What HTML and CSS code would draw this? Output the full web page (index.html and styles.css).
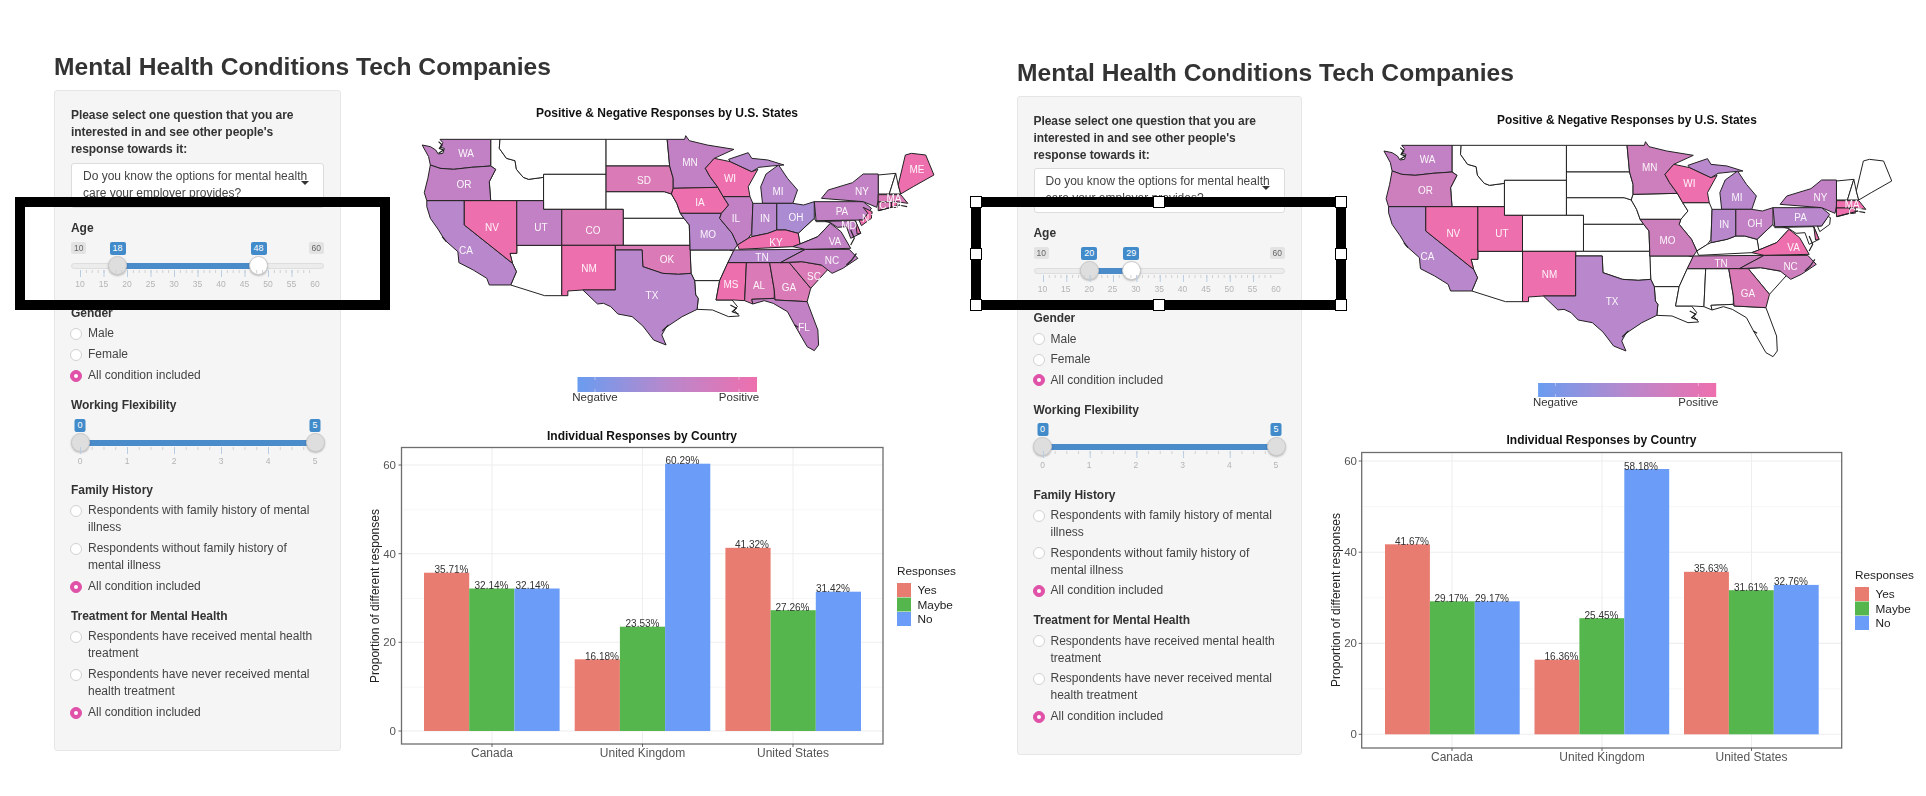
FILE: index.html
```html
<!DOCTYPE html>
<html lang="en">
<head>
<meta charset="utf-8">
<title>Mental Health Conditions Tech Companies</title>
<link rel="stylesheet" href="styles.css">
</head>
<body>
<main class="page">
  <section class="shot shot-a">
    <h2 class="title">Mental Health Conditions Tech Companies</h2>
    <div class="shot-body">
      <aside class="sidebar">
        <label class="label">Please select one question that you are<br>interested in and see other people's<br>response towards it:</label>
        <div class="select">Do you know the options for mental health<br>care your employer provides?<i class="caret"></i></div>
        <h4 class="label age-label">Age</h4>
        <div class="slider">
          <div class="values"><span class="edge">10</span><span class="edge">60</span>
            <div class="rail"><b class="badge" style="left:16%">18</b><b class="badge" style="left:76%">48</b></div></div>
          <div class="track"><div class="rail"><i class="fill" style="left:16%;width:60%"></i><i class="thumb" style="left:16%"></i><i class="thumb thumb-on" style="left:76%"></i></div></div>
          <div class="rail grid grid-age"></div>
          <div class="rail ticks"><span>10</span><span>15</span><span>20</span><span>25</span><span>30</span><span>35</span><span>40</span><span>45</span><span>50</span><span>55</span><span>60</span></div>
        </div>
        <h4 class="label">Gender</h4>
        <div class="radios">
          <div class="radio"><i class="dot"></i><span>Male</span></div>
          <div class="radio"><i class="dot"></i><span>Female</span></div>
          <div class="radio"><i class="dot dot-on"></i><span>All condition included</span></div>
        </div>
        <h4 class="label group">Working Flexibility</h4>
        <div class="slider">
          <div class="values"><div class="rail"><b class="badge" style="left:0%">0</b><b class="badge" style="left:100%">5</b></div></div>
          <div class="track"><div class="rail"><i class="fill" style="left:0%;width:100%"></i><i class="thumb" style="left:0%"></i><i class="thumb" style="left:100%"></i></div></div>
          <div class="rail grid grid-flex"></div>
          <div class="rail ticks"><span>0</span><span>1</span><span>2</span><span>3</span><span>4</span><span>5</span></div>
        </div>
        <h4 class="label">Family History</h4>
        <div class="radios">
          <div class="radio"><i class="dot"></i><span>Respondents with family history of mental<br>illness</span></div>
          <div class="radio"><i class="dot"></i><span>Respondents without family history of<br>mental illness</span></div>
          <div class="radio"><i class="dot dot-on"></i><span>All condition included</span></div>
        </div>
        <h4 class="label group">Treatment for Mental Health</h4>
        <div class="radios">
          <div class="radio"><i class="dot"></i><span>Respondents have received mental health<br>treatment</span></div>
          <div class="radio"><i class="dot"></i><span>Respondents have never received mental<br>health treatment</span></div>
          <div class="radio"><i class="dot dot-on"></i><span>All condition included</span></div>
        </div>
      </aside>
      <div class="plots">
        <svg class="map" viewBox="0 0 560 330" preserveAspectRatio="none" role="img" aria-label="Map of responses by U.S. state">
          <defs>
            <linearGradient id="scale"><stop offset="0" stop-color="#6a9cf0"/><stop offset=".5" stop-color="#b888cc"/><stop offset="1" stop-color="#ee6fae"/></linearGradient>
            <path id="wa" class="st" d="M112,148 L254,148 L254,228 L200,232 L150,238 L112,235 L85,225 L80,200 L62,165 L85,170 L100,180 L107,192 L120,190 L124,175 L112,172 L120,158 Z"/>
            <path id="or" class="st" d="M85,225 L112,235 L150,238 L200,232 L254,228 L268,238 L250,275 L254,332 L75,332 L68,308 L78,265 Z"/>
            <path id="ca" class="st" d="M75,332 L180,332 L180,405 L315,520 L326,545 L310,585 L250,585 L243,565 L205,540 L165,518 L162,485 L125,450 L108,420 L85,385 L75,350 Z"/>
            <path id="nv" class="st" d="M180,332 L327,332 L327,490 L308,490 L315,520 L180,405 Z"/>
            <path id="id" class="st" d="M254,148 L280,148 L278,175 L298,205 L322,212 L326,238 L345,262 L360,268 L402,262 L402,332 L254,332 L250,275 L268,238 L254,228 Z"/>
            <path id="mt" class="st" d="M280,148 L577,148 L577,253 L402,253 L402,262 L360,268 L345,262 L326,238 L322,212 L298,205 L278,175 Z"/>
            <path id="wy" class="st" d="M402,253 L577,253 L577,358 L402,358 Z"/>
            <path id="ut" class="st" d="M327,332 L402,332 L402,358 L453,358 L453,466 L327,466 Z"/>
            <path id="co" class="st" d="M453,358 L625,358 L625,466 L453,466 Z"/>
            <path id="az" class="st" d="M327,466 L453,466 L453,617 L405,617 L310,585 L326,545 L315,520 L308,490 L327,490 Z"/>
            <path id="nm" class="st" d="M453,466 L603,466 L603,600 L512,600 L470,603 L470,617 L453,617 Z"/>
            <path id="nd" class="st" d="M577,148 L748,148 L755,228 L577,228 Z"/>
            <path id="sd" class="st" d="M577,228 L755,228 L765,265 L765,295 L760,312 L740,305 L577,305 Z"/>
            <path id="ne" class="st" d="M577,305 L740,305 L760,312 L775,340 L785,370 L795,385 L625,385 L625,358 L577,358 Z"/>
            <path id="ks" class="st" d="M625,385 L795,385 L810,405 L812,466 L625,466 Z"/>
            <path id="ok" class="st" d="M603,466 L812,466 L815,550 L780,553 L735,550 L680,530 L678,480 L603,480 Z"/>
            <path id="tx" class="st" d="M603,480 L678,480 L680,530 L735,550 L780,553 L815,550 L825,572 L828,615 L835,625 L832,658 L790,680 L745,712 L733,735 L745,765 L710,750 L680,708 L650,680 L610,672 L590,650 L570,640 L553,642 L512,600 L603,600 Z"/>
            <path id="mn" class="st" d="M748,148 L797,148 L800,137 L810,152 L860,165 L935,178 L880,205 L855,235 L868,260 L890,292 L765,295 L765,265 L755,228 Z"/>
            <path id="ia" class="st" d="M765,295 L890,292 L905,320 L920,345 L900,370 L785,370 L775,340 L760,312 Z"/>
            <path id="mo" class="st" d="M785,370 L900,370 L895,385 L930,430 L945,465 L935,480 L920,480 L812,480 L812,466 L810,405 L795,385 Z"/>
            <path id="ar" class="st" d="M812,480 L920,480 L935,483 L918,518 L895,572 L825,572 L815,550 Z"/>
            <path id="la" class="st" d="M825,572 L895,572 L885,630 L930,630 L945,650 L935,660 L950,678 L920,680 L875,660 L832,658 L835,625 L828,615 Z"/>
            <path id="wi" class="st" d="M855,235 L880,205 L925,215 L985,245 L1002,238 L975,290 L980,320 L905,320 L890,292 L868,260 Z"/>
            <path id="il" class="st" d="M905,320 L980,320 L988,340 L985,430 L975,445 L945,465 L930,430 L895,385 L900,370 L920,345 Z"/>
            <path id="mu" class="st" d="M920,208 L975,188 L985,205 L1030,210 L1075,225 L1040,228 L1005,232 L985,245 L925,215 Z"/>
            <path id="ml" class="st" d="M1015,340 L1010,290 L1025,252 L1060,225 L1085,265 L1113,300 L1100,340 Z"/>
            <path id="in" class="st" d="M988,340 L1055,340 L1055,420 L1030,430 L985,440 L985,430 Z"/>
            <path id="oh" class="st" d="M1055,340 L1100,340 L1130,345 L1160,335 L1160,385 L1115,430 L1080,420 L1055,420 Z"/>
            <path id="ky" class="st" d="M945,465 L975,445 L985,440 L1030,430 L1055,420 L1080,420 L1115,430 L1120,462 L1100,470 L950,478 Z"/>
            <path id="tn" class="st" d="M935,480 L1135,478 L1065,518 L918,518 Z"/>
            <path id="ms" class="st" d="M918,518 L970,518 L965,632 L935,630 L885,630 L895,572 Z"/>
            <path id="al" class="st" d="M970,518 L1035,518 L1048,600 L1048,625 L985,628 L988,642 L965,632 Z"/>
            <path id="ga" class="st" d="M1035,518 L1090,518 L1150,595 L1140,635 L1050,630 L1048,600 Z"/>
            <path id="sc" class="st" d="M1090,518 L1125,515 L1205,530 L1150,595 Z"/>
            <path id="nc" class="st" d="M1065,518 L1135,478 L1258,478 L1282,505 L1240,535 L1210,550 L1180,525 L1125,515 Z"/>
            <path id="va" class="st" d="M1100,470 L1120,462 L1170,440 L1205,400 L1235,425 L1262,475 L1135,478 Z"/>
            <path id="wv" class="st" d="M1115,430 L1160,385 L1165,395 L1205,395 L1205,400 L1170,440 L1120,462 Z"/>
            <path id="pa" class="st" d="M1160,335 L1297,335 L1320,355 L1297,390 L1165,392 Z"/>
            <path id="ny" class="st" d="M1180,325 L1199,300 L1267,278 L1297,252 L1339,252 L1339,330 L1335,352 L1297,335 Z"/>
            <path id="nj" class="st" d="M1297,352 L1322,365 L1320,385 L1292,407 L1285,390 L1297,390 L1310,370 Z"/>
            <path id="me" class="st" d="M1395,285 L1405,240 L1415,195 L1432,190 L1472,195 L1495,255 L1437,290 L1402,312 Z"/>
            <path id="vt" class="st" d="M1339,255 L1388,250 L1370,312 L1339,312 Z"/>
            <path id="nh" class="st" d="M1388,250 L1395,285 L1402,312 L1370,312 Z"/>
            <path id="ma" class="st" d="M1339,314 L1402,314 L1422,340 L1395,336 L1339,336 Z"/>
            <path id="ct" class="st" d="M1339,336 L1376,336 L1376,352 L1339,362 Z"/>
            <path id="ri" class="st" d="M1376,336 L1392,336 L1392,352 L1376,352 Z"/>
            <path id="md" class="st" d="M1190,394 L1275,392 L1290,430 L1262,445 L1250,410 L1225,412 L1205,398 Z"/>
            <path id="de" class="st" d="M1275,392 L1290,430 L1280,432 Z"/>
            <path id="fl" class="st" d="M988,642 L985,628 L1048,625 L1050,630 L1140,635 L1170,720 L1172,765 L1160,782 L1140,770 L1105,705 L1085,665 L1045,640 L1020,632 Z"/>
            <path id="coast" class="st" d="M108,155 L118,165 L110,175 L122,180 L108,190 M1262,420 L1272,445 L1262,465 M1278,490 L1265,510 L1250,525 M925,645 L942,655 L930,665 L948,672 M745,712 L735,722 L752,705 M118,440 L130,455 M1105,705 L1115,712 M1340,362 L1400,345 M1395,345 L1420,350"/>
          </defs>
          <text class="chart-title" x="267" y="27" text-anchor="middle">Positive &amp; Negative Responses by U.S. States</text>
          <g class="states" transform="scale(.35714 .33333)">
            <use href="#id"/><use href="#mt"/><use href="#wy"/><use href="#az"/><use href="#nd"/><use href="#ne"/><use href="#ks"/><use href="#ar"/><use href="#la"/><use href="#wv"/><use href="#vt"/><use href="#nh"/>
            <use href="#wa" class="c3"/><use href="#or" class="c3"/><use href="#ca" class="c4"/><use href="#nv" class="c1"/><use href="#ut" class="c3"/><use href="#co" class="c2"/><use href="#nm" class="c1"/><use href="#ok" class="c2"/><use href="#tx" class="c4"/><use href="#sd" class="c2"/><use href="#mn" class="c3"/><use href="#ia" class="c1"/><use href="#mo" class="c4"/><use href="#wi" class="c1"/><use href="#il" class="c3"/><use href="#mu" class="c4"/><use href="#ml" class="c4"/><use href="#in" class="c4"/><use href="#oh" class="c5"/><use href="#ky" class="c1"/><use href="#tn" class="c4"/><use href="#ms" class="c1"/><use href="#al" class="c2"/><use href="#ga" class="c2"/><use href="#sc" class="c2"/><use href="#nc" class="c3"/><use href="#va" class="c3"/><use href="#pa" class="c3"/><use href="#ny" class="c3"/><use href="#nj" class="c1"/><use href="#me" class="c1"/><use href="#ma" class="c2"/><use href="#ct" class="c2"/><use href="#ri" class="c1"/><use href="#md" class="c3"/><use href="#de" class="c1"/><use href="#fl" class="c3"/><use href="#coast" class="bare"/>
          </g>
          <g class="st-names">
            <text x="66" y="63">WA</text><text x="64" y="94">OR</text><text x="66" y="160">CA</text><text x="92" y="137">NV</text><text x="141" y="137">UT</text><text x="193" y="140">CO</text><text x="189" y="178">NM</text><text x="252" y="205">TX</text><text x="267" y="169">OK</text><text x="244" y="90">SD</text><text x="290" y="72">MN</text><text x="300" y="112">IA</text><text x="308" y="144">MO</text><text x="330" y="88">WI</text><text x="336" y="128">IL</text><text x="378" y="101">MI</text><text x="365" y="128">IN</text><text x="396" y="127">OH</text><text x="376" y="152">KY</text><text x="362" y="167">TN</text><text x="331" y="194">MS</text><text x="359" y="195">AL</text><text x="389" y="197">GA</text><text x="414" y="186">SC</text><text x="432" y="170">NC</text><text x="435" y="151">VA</text><text x="442" y="121">PA</text><text x="462" y="101">NY</text><text x="517" y="79">ME</text><text x="494" y="108">MA</text><text x="486" y="115">CT</text><text x="497" y="116">RI</text><text x="468" y="128">NJ</text><text x="449" y="135">MD</text><text x="404" y="237">FL</text>
          </g>
          <rect x="177.5" y="287" width="179.5" height="15" fill="url(#scale)"/>
          <path class="bar-tick" d="M195,287v3M195,299v3M339,287v3M339,299v3"/>
          <text class="scale-text" x="195" y="311" text-anchor="middle">Negative</text>
          <text class="scale-text" x="339" y="311" text-anchor="middle">Positive</text>
        </svg>
        <svg class="bars" viewBox="360 420 620 350" role="img" aria-label="Individual responses by country">
          <text class="chart-title" x="642" y="440" text-anchor="middle">Individual Responses by Country</text>
          <path class="minor" d="M402,509.8H883M402,598.5H883M402,687.2H883"/>
          <path class="major" d="M402,465H883M402,553.7H883M402,642.3H883M402,731H883M492,448V744M642.5,448V744M793,448V744"/>
          <rect class="yes" x="424" y="572.7" width="45.2" height="158.3"/><rect class="maybe" x="469.2" y="588.5" width="45.2" height="142.5"/><rect class="no" x="514.4" y="588.5" width="45.2" height="142.5"/>
          <rect class="yes" x="574.7" y="659.3" width="45.2" height="71.7"/><rect class="maybe" x="619.9" y="626.7" width="45.2" height="104.3"/><rect class="no" x="665.1" y="463.7" width="45.2" height="267.3"/>
          <rect class="yes" x="725.4" y="547.8" width="45.2" height="183.2"/><rect class="maybe" x="770.6" y="610.2" width="45.2" height="120.8"/><rect class="no" x="815.8" y="591.7" width="45.2" height="139.3"/>
          <rect class="frame" x="401.5" y="447.5" width="481.5" height="296.5"/>
          <path class="axis-tick" d="M398.5,465h3M398.5,553.7h3M398.5,642.3h3M398.5,731h3M492,744v3M642.5,744v3M793,744v3"/>
          <g class="val">
            <text x="451.5" y="573">35.71%</text><text x="491.5" y="589">32.14%</text><text x="532.5" y="589">32.14%</text>
            <text x="602" y="659.5">16.18%</text><text x="642.5" y="627">23.53%</text><text x="682.5" y="464">60.29%</text>
            <text x="752" y="548">41.32%</text><text x="792.5" y="610.5">27.26%</text><text x="833" y="592">31.42%</text>
          </g>
          <g class="tick-y"><text x="396" y="469">60</text><text x="396" y="557.7">40</text><text x="396" y="646.3">20</text><text x="396" y="735">0</text></g>
          <g class="tick-x"><text x="492" y="757">Canada</text><text x="642.5" y="757">United Kingdom</text><text x="793" y="757">United States</text></g>
          <text class="axis-title" transform="translate(379 596) rotate(-90)" text-anchor="middle">Proportion of different responses</text>
          <text class="legend-title" x="897" y="575">Responses</text>
          <rect class="yes" x="897" y="583" width="14" height="14"/><rect class="maybe" x="897" y="597.5" width="14" height="14"/><rect class="no" x="897" y="612" width="14" height="14"/>
          <g class="legend-text"><text x="917.5" y="594">Yes</text><text x="917.5" y="608.5">Maybe</text><text x="917.5" y="623">No</text></g>
        </svg>
      </div>
    </div>
  </section>

  <section class="shot shot-b">
    <h2 class="title">Mental Health Conditions Tech Companies</h2>
    <div class="shot-body">
      <aside class="sidebar">
        <label class="label">Please select one question that you are<br>interested in and see other people's<br>response towards it:</label>
        <div class="select">Do you know the options for mental health<br>care your employer provides?<i class="caret"></i></div>
        <h4 class="label age-label">Age</h4>
        <div class="slider">
          <div class="values"><span class="edge">10</span><span class="edge">60</span>
            <div class="rail"><b class="badge" style="left:20%">20</b><b class="badge" style="left:38%">29</b></div></div>
          <div class="track"><div class="rail"><i class="fill" style="left:20%;width:18%"></i><i class="thumb" style="left:20%"></i><i class="thumb thumb-on" style="left:38%"></i></div></div>
          <div class="rail grid grid-age"></div>
          <div class="rail ticks"><span>10</span><span>15</span><span>20</span><span>25</span><span>30</span><span>35</span><span>40</span><span>45</span><span>50</span><span>55</span><span>60</span></div>
        </div>
        <h4 class="label">Gender</h4>
        <div class="radios">
          <div class="radio"><i class="dot"></i><span>Male</span></div>
          <div class="radio"><i class="dot"></i><span>Female</span></div>
          <div class="radio"><i class="dot dot-on"></i><span>All condition included</span></div>
        </div>
        <h4 class="label group">Working Flexibility</h4>
        <div class="slider">
          <div class="values"><div class="rail"><b class="badge" style="left:0%">0</b><b class="badge" style="left:100%">5</b></div></div>
          <div class="track"><div class="rail"><i class="fill" style="left:0%;width:100%"></i><i class="thumb" style="left:0%"></i><i class="thumb" style="left:100%"></i></div></div>
          <div class="rail grid grid-flex"></div>
          <div class="rail ticks"><span>0</span><span>1</span><span>2</span><span>3</span><span>4</span><span>5</span></div>
        </div>
        <h4 class="label">Family History</h4>
        <div class="radios">
          <div class="radio"><i class="dot"></i><span>Respondents with family history of mental<br>illness</span></div>
          <div class="radio"><i class="dot"></i><span>Respondents without family history of<br>mental illness</span></div>
          <div class="radio"><i class="dot dot-on"></i><span>All condition included</span></div>
        </div>
        <h4 class="label group">Treatment for Mental Health</h4>
        <div class="radios">
          <div class="radio"><i class="dot"></i><span>Respondents have received mental health<br>treatment</span></div>
          <div class="radio"><i class="dot"></i><span>Respondents have never received mental<br>health treatment</span></div>
          <div class="radio"><i class="dot dot-on"></i><span>All condition included</span></div>
        </div>
      </aside>
      <div class="plots">
        <svg class="map" viewBox="0 0 560 330" preserveAspectRatio="none" role="img" aria-label="Map of responses by U.S. state">
          <text class="chart-title" x="267" y="28" text-anchor="middle">Positive &amp; Negative Responses by U.S. States</text>
          <g class="states" transform="scale(.35714 .33333)">
            <use href="#id"/><use href="#mt"/><use href="#wy"/><use href="#az"/><use href="#nd"/><use href="#ne"/><use href="#ks"/><use href="#ar"/><use href="#la"/><use href="#wv"/><use href="#vt"/><use href="#nh"/><use href="#sd"/><use href="#ia"/><use href="#il"/><use href="#co"/><use href="#ok"/><use href="#ky"/><use href="#ms"/><use href="#al"/><use href="#sc"/><use href="#fl"/><use href="#me"/><use href="#nj"/><use href="#md"/>
            <use href="#wa" class="c3"/><use href="#or" class="c6"/><use href="#ca" class="c4"/><use href="#nv" class="c1"/><use href="#ut" class="c1"/><use href="#nm" class="c1"/><use href="#tx" class="c4"/><use href="#mn" class="c6"/><use href="#mo" class="c6"/><use href="#wi" class="c1"/><use href="#mu" class="c4"/><use href="#ml" class="c4"/><use href="#in" class="c4"/><use href="#oh" class="c3"/><use href="#tn" class="c6"/><use href="#ga" class="c2"/><use href="#nc" class="c6"/><use href="#va" class="c1"/><use href="#pa" class="c4"/><use href="#ny" class="c3"/><use href="#ma" class="c1"/><use href="#ct" class="c1"/><use href="#ri" class="c1"/><use href="#de" class="c1"/><use href="#coast" class="bare"/>
          </g>
          <g class="st-names">
            <text x="66" y="63">WA</text><text x="64" y="94">OR</text><text x="66" y="160">CA</text><text x="92" y="137">NV</text><text x="141" y="137">UT</text><text x="189" y="178">NM</text><text x="252" y="205">TX</text><text x="290" y="72">MN</text><text x="308" y="144">MO</text><text x="330" y="88">WI</text><text x="378" y="101">MI</text><text x="365" y="128">IN</text><text x="396" y="127">OH</text><text x="362" y="167">TN</text><text x="389" y="197">GA</text><text x="432" y="170">NC</text><text x="435" y="151">VA</text><text x="442" y="121">PA</text><text x="462" y="101">NY</text><text x="494" y="108">MA</text><text x="497" y="116">CT</text>
          </g>
          <rect x="177.5" y="287" width="179.5" height="14" fill="url(#scale)"/>
          <path class="bar-tick" d="M195,287v3M195,298v3M339,287v3M339,298v3"/>
          <text class="scale-text" x="195" y="310" text-anchor="middle">Negative</text>
          <text class="scale-text" x="339" y="310" text-anchor="middle">Positive</text>
        </svg>
        <svg class="bars" viewBox="1320 426 606 350" role="img" aria-label="Individual responses by country">
          <text class="chart-title" x="1601.5" y="444" text-anchor="middle">Individual Responses by Country</text>
          <path class="minor" d="M1362,506.6H1842M1362,597.8H1842M1362,688.9H1842"/>
          <path class="major" d="M1362,461H1842M1362,552.2H1842M1362,643.4H1842M1362,734.3H1842M1452,453V748M1602,453V748M1751.5,453V748"/>
          <rect class="yes" x="1385" y="544.3" width="44.9" height="190"/><rect class="maybe" x="1429.9" y="601.3" width="44.9" height="133"/><rect class="no" x="1474.8" y="601.3" width="44.9" height="133"/>
          <rect class="yes" x="1534.5" y="659.7" width="44.9" height="74.6"/><rect class="maybe" x="1579.4" y="618.2" width="44.9" height="116.1"/><rect class="no" x="1624.3" y="469" width="44.9" height="265.3"/>
          <rect class="yes" x="1684" y="571.8" width="44.9" height="162.5"/><rect class="maybe" x="1728.9" y="590.2" width="44.9" height="144.1"/><rect class="no" x="1773.8" y="584.9" width="44.9" height="149.4"/>
          <rect class="frame" x="1361.7" y="452.5" width="480" height="295.5"/>
          <path class="axis-tick" d="M1358.7,461h3M1358.7,552.2h3M1358.7,643.4h3M1358.7,734.3h3M1452,748v3M1602,748v3M1751.5,748v3"/>
          <g class="val">
            <text x="1412" y="544.5">41.67%</text><text x="1451.5" y="601.5">29.17%</text><text x="1492" y="601.5">29.17%</text>
            <text x="1561.5" y="660">16.36%</text><text x="1601.5" y="618.5">25.45%</text><text x="1641" y="469.5">58.18%</text>
            <text x="1711" y="572">35.63%</text><text x="1751" y="590.5">31.61%</text><text x="1791" y="585">32.76%</text>
          </g>
          <g class="tick-y"><text x="1357" y="465">60</text><text x="1357" y="556.2">40</text><text x="1357" y="647.4">20</text><text x="1357" y="738.3">0</text></g>
          <g class="tick-x"><text x="1452" y="761">Canada</text><text x="1602" y="761">United Kingdom</text><text x="1751.5" y="761">United States</text></g>
          <text class="axis-title" transform="translate(1340 600) rotate(-90)" text-anchor="middle">Proportion of different responses</text>
          <text class="legend-title" x="1855" y="579">Responses</text>
          <rect class="yes" x="1855" y="587" width="14" height="14"/><rect class="maybe" x="1855" y="601.5" width="14" height="14"/><rect class="no" x="1855" y="616" width="14" height="14"/>
          <g class="legend-text"><text x="1875.5" y="598">Yes</text><text x="1875.5" y="612.5">Maybe</text><text x="1875.5" y="627">No</text></g>
        </svg>
      </div>
    </div>
  </section>

  <div class="mark mark-a"></div>
  <div class="mark mark-b">
    <i class="grip tl"></i><i class="grip tc"></i><i class="grip tr"></i><i class="grip ml"></i><i class="grip mr"></i><i class="grip bl"></i><i class="grip bc"></i><i class="grip br"></i>
  </div>
</main>
</body>
</html>
```
FILE: styles.css
```css
* { box-sizing: border-box; }
html, body { margin: 0; padding: 0; background: #fff; }
body { font-family: "Liberation Sans", Arial, sans-serif; color: #333; font-size: 12px; line-height: 17px; }

.page { position: relative; display: flex; gap: 37px; width: 1926px; height: 796px; padding: 53px 0 0 54px; overflow: hidden; }
.shot { flex: none; filter: blur(.4px); }
.shot-a { width: 926px; }
.shot-b { width: 909px; padding-top: 6px; }

.title { margin: 0 0 9px; font-size: 24.6px; line-height: 28px; font-weight: 700; color: #333; white-space: nowrap; }
.shot-body { display: flex; align-items: flex-start; gap: 19px; }
.shot-b .shot-body { gap: 18px; }

.sidebar { flex: none; width: 287px; padding: 15.5px 16px 28.5px; background: #f5f5f5; border: 1px solid #e6e6e6; border-radius: 3px; }
.shot-b .sidebar { width: 285px; padding-left: 15.5px; padding-right: 16px; }

.label { display: block; margin: 0; font-size: 12px; line-height: 17px; font-weight: 700; letter-spacing: -.06px; color: #333; }
.group { margin-top: 13px; }
.age-label { margin-top: 12.5px; }

.select { position: relative; height: 45px; margin-top: 5px; padding: 4.5px 11px 0; overflow: hidden; background: #fff; border: 1px solid #dcdcdc; border-radius: 3px; white-space: nowrap; color: #444; }
.shot-b .select { margin-top: 4px; }
.caret { position: absolute; top: 17px; right: 14px; width: 0; height: 0; border: 4px solid transparent; border-top-color: #333; border-bottom: 0; }

.slider { height: 68px; padding: 4.5px 0 11px; }
.rail { position: relative; margin: 0 9px; }
.values { position: relative; display: flex; justify-content: space-between; height: 13px; }
.values .rail { position: absolute; left: 0; right: 0; top: 0; height: 13px; }
.edge { height: 12px; padding: 0 3px; background: #e3e3e3; border-radius: 2px; font-size: 8.5px; line-height: 12px; color: #666; }
.badge { position: absolute; top: 0; transform: translateX(-50%); height: 13px; padding: 0 3px; background: #428bca; border-radius: 2px; font-size: 9px; line-height: 13px; font-weight: 400; color: #fff; }
.track { height: 6px; margin-top: 8px; background: #ececec; border: 1px solid #dedede; border-radius: 3px; }
.track .rail { height: 4px; margin: 0 8px; }
.fill { position: absolute; top: -1px; height: 6px; background: #4a8bca; }
.thumb { position: absolute; top: -8px; width: 19px; height: 19px; margin-left: -9.5px; background: #dedede; border: 1px solid #c9c9c9; border-radius: 50%; box-shadow: 0 1px 2px rgba(0,0,0,.25); }
.thumb-on { background: #fff; }
.grid { height: 7px; margin-top: 1px; background-repeat: repeat-x; background-position: left top; }
.grid-age { background-image: linear-gradient(to right, #b9cde2 1px, transparent 1px), linear-gradient(to right, #d0d0d0 1px, transparent 1px); background-size: 23.5px 7px, 5.875px 3px; }
.shot-b .grid-age { background-size: 23.35px 7px, 5.84px 3px; }
.grid-flex { background-image: linear-gradient(to right, #b9cde2 1px, transparent 1px), linear-gradient(to right, #d0d0d0 1px, transparent 1px); background-size: 47px 7px, 11.75px 3px; }
.shot-b .grid-flex { background-size: 46.7px 7px, 11.68px 3px; }
.ticks { display: flex; justify-content: space-between; height: 12px; margin-top: 1px; font-size: 8.5px; line-height: 12px; color: #b4b4b4; }
.ticks span { flex: none; width: 0; display: flex; justify-content: center; white-space: nowrap; }

.radios { display: flex; flex-direction: column; gap: 4px; margin-top: 3px; }
.shot-b .radios { gap: 3.6px; margin-top: 3.5px; }
.radio { display: flex; align-items: flex-start; gap: 6px; color: #444; white-space: nowrap; }
.dot { flex: none; position: relative; width: 12px; height: 12px; margin: 2.5px 0 0 -1px; background: #fff; border: 1px solid #d2d2d2; border-radius: 50%; }
.dot-on { background: #e052a8; border-color: #e052a8; }
.dot-on::after { content: ""; position: absolute; left: 3px; top: 3px; width: 4px; height: 4px; background: #fff; border-radius: 50%; }

.plots { flex: none; }
.map { display: block; width: 560px; height: 330px; margin-left: 40px; }
.shot-b .map { width: 555.6px; margin-left: 41.5px; }
.bars { display: block; width: 620px; height: 350px; }
.shot-b .bars { width: 606px; }

.st { vector-effect: non-scaling-stroke; stroke-linejoin: round; }
.states { fill: #fff; stroke: #222; stroke-width: 1; }
.bare { fill: none; stroke-width: 1.2; }
.c1 { fill: #ee6fae; }
.c2 { fill: #da7ab6; }
.c3 { fill: #c281c4; }
.c4 { fill: #b887cc; }
.c5 { fill: #ab8cd3; }
.c6 { fill: #cd7ebd; }
.st-names text { font-size: 10px; fill: #fff; fill-opacity: .92; text-anchor: middle; dominant-baseline: central; }
.chart-title { font-size: 12px; font-weight: 700; fill: #111; }
.scale-text { font-size: 11.5px; fill: #333; }
.bar-tick { stroke: #fff; stroke-width: .6; stroke-opacity: .7; fill: none; }

.major { stroke: #eeeeee; stroke-width: 1.1; fill: none; }
.minor { stroke: #f4f4f4; stroke-width: .7; fill: none; }
.yes { fill: #e87c70; }
.maybe { fill: #54b64c; }
.no { fill: #6b9cf8; }
.frame { fill: none; stroke: #6e6e6e; stroke-width: 1.3; }
.axis-tick { stroke: #444; stroke-width: .8; fill: none; }
.val text { font-size: 10px; fill: #333; text-anchor: middle; }
.tick-y text { font-size: 11.5px; fill: #555; text-anchor: end; }
.tick-x text { font-size: 12px; fill: #555; text-anchor: middle; }
.axis-title { font-size: 12px; fill: #222; }
.legend-title { font-size: 11.8px; fill: #222; }
.legend-text text { font-size: 11.8px; fill: #222; }

.mark { position: absolute; border: 10px solid #000; }
.mark-a { left: 15px; top: 197px; width: 375px; height: 113px; }
.mark-b { left: 971px; top: 197px; width: 375px; height: 113px; }
.grip { position: absolute; width: 12px; height: 12px; background: #fff; border: 1px solid #000; }
.tl { left: -11px; top: -11px; }
.tc { left: 172px; top: -11px; }
.tr { right: -11px; top: -11px; }
.ml { left: -11px; top: 41px; }
.mr { right: -11px; top: 41px; }
.bl { left: -11px; bottom: -11px; }
.bc { left: 172px; bottom: -11px; }
.br { right: -11px; bottom: -11px; }
```
